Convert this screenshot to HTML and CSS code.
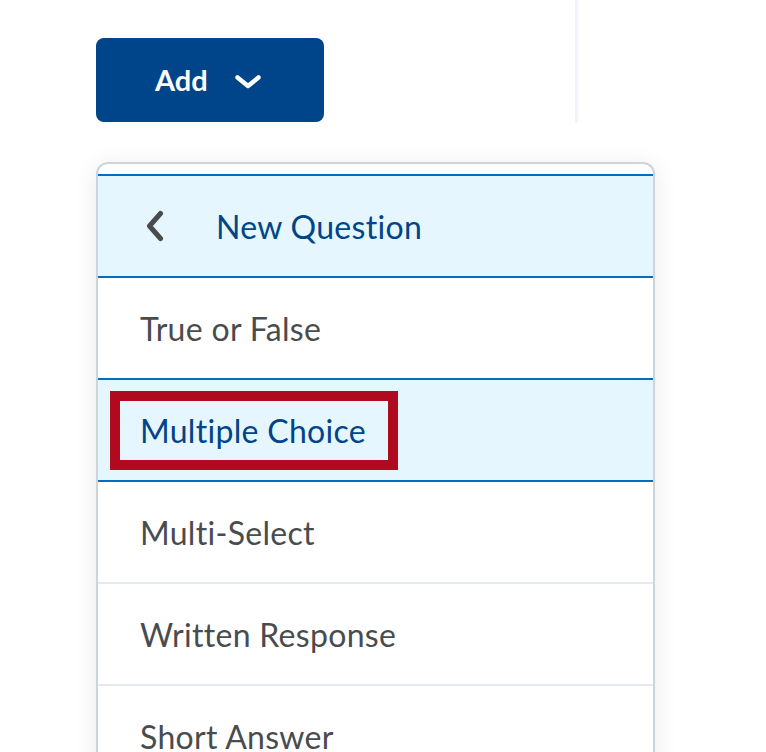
FILE: index.html
```html
<!DOCTYPE html>
<html>
<head>
<meta charset="utf-8">
<link rel="stylesheet" href="styles.css">
</head>
<body>
<div class="toolbar">
  <button class="add-btn">
    <span class="add-label">Add</span>
    <svg class="add-chev" width="26" height="14" viewBox="0 0 26 14"><path d="M2.5 2.5 L13 11 L23.5 2.5" fill="none" stroke="#fff" stroke-width="4.5" stroke-linecap="round" stroke-linejoin="round"/></svg>
  </button>
</div>
<div class="menu">
  <div class="menu-header">
    <svg class="back-chev" width="20" height="32" viewBox="0 0 20 32"><path d="M15.5 3.5 L4.5 16 L15.5 28.5" fill="none" stroke="#494c4e" stroke-width="5" stroke-linecap="round" stroke-linejoin="round"/></svg>
    <span class="header-label">New Question</span>
  </div>
  <div class="item">True or False</div>
  <div class="item item-active"><span class="mark">Multiple Choice</span></div>
  <div class="item item-sep">Multi-Select</div>
  <div class="item item-sep">Written Response</div>
  <div class="item">Short Answer</div>
</div>
</body>
</html>
```
FILE: styles.css
```css
html, body {
  margin: 0;
  padding: 0;
  background: #fff;
  font-family: Lato, "Open Sans", sans-serif;
  font-variant-ligatures: none;
  overflow: hidden;
  height: 752px;
}
.toolbar {
  height: 123px;
  border-right: 3px solid #f1f5fb;
  box-sizing: border-box;
  width: 578px;
  padding: 38px 0 0 96px;
}
.add-btn {
  display: flex;
  align-items: center;
  width: 228px;
  height: 84px;
  background: #004489;
  border: none;
  border-radius: 8px;
  padding: 0 0 0 59px;
  margin: 0;
  color: #fff;
  font-family: Lato, sans-serif;
  box-sizing: border-box;
}
.add-label {
  font-weight: 700;
  font-size: 29px;
  margin-top: -2px;
}
.add-chev {
  margin-left: 27px;
  margin-top: 3px;
}
.menu {
  margin: 39px 0 0 96px;
  width: 559px;
  border: 2px solid #cdd5dc;
  border-bottom: none;
  border-radius: 12px 12px 0 0;
  padding-top: 10px;
  box-sizing: border-box;
  background: #fff;
  box-shadow: 0 4px 24px rgba(0, 0, 0, 0.09);
}
.menu-header {
  height: 100px;
  border-top: 2px solid #006fbf;
  border-bottom: 2px solid #006fbf;
  background: #e6f6ff;
  display: flex;
  align-items: center;
  padding-left: 47px;
}
.back-chev {
  margin-right: 51px;
}
.header-label {
  color: #004489;
  font-size: 32px;
  letter-spacing: 0.3px;
}
.item {
  height: 100px;
  display: flex;
  align-items: center;
  padding-left: 42px;
  font-size: 32px;
  letter-spacing: 0.3px;
  color: #494c4e;
}
.item-active {
  border-top: 2px solid #006fbf;
  border-bottom: 2px solid #006fbf;
  background: #e6f6ff;
  color: #004489;
}
.item-sep {
  border-bottom: 2px solid #e3e9f1;
}
.mark {
  margin-left: -30px;
  padding: 10px 22px 10px 20px;
  border: 10px solid #b00a1f;
}
```
